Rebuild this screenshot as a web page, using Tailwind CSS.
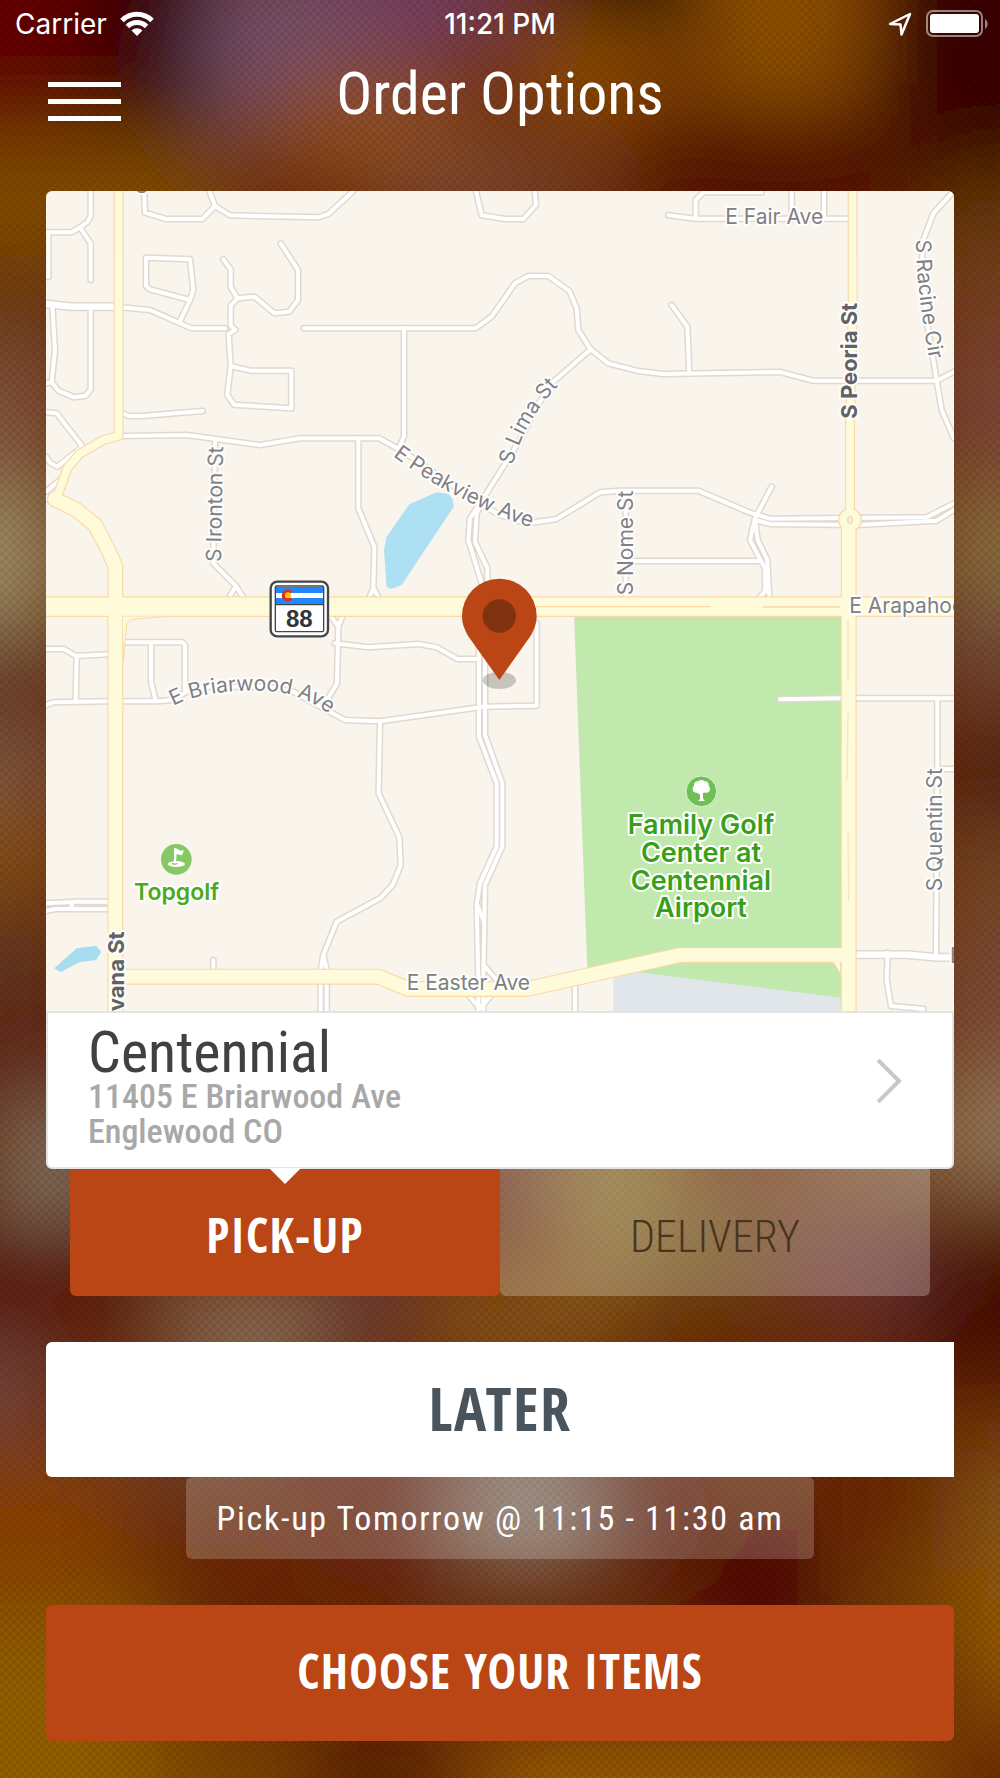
<!DOCTYPE html>
<html lang="en">
<head>
    <meta charset="UTF-8">
    <meta name="viewport" content="width=device-width, initial-scale=1.0">
    <title>Order Options</title>
    <script src="https://cdn.jsdelivr.net/npm/@tailwindcss/browser@4"></script>
</head>
<body class="relative isolate flex min-h-screen flex-col overflow-x-hidden bg-[#6a2a08] font-['Roboto_Condensed','Open_Sans_Condensed',sans-serif] text-white">
    <!-- Blurred backdrop -->
    <svg class="absolute inset-0 -z-10 h-full w-full" viewBox="0 0 1000 1778" preserveAspectRatio="none" aria-hidden="true">
        <defs>
            <filter id="soft" x="-20%" y="-20%" width="140%" height="140%"><feGaussianBlur stdDeviation="42"/></filter>
            <pattern id="dots" width="8" height="8" patternUnits="userSpaceOnUse">
                <circle cx="2" cy="2" r="2" fill="#000" fill-opacity=".08"/>
                <circle cx="6" cy="6" r="2" fill="#000" fill-opacity=".08"/>
            </pattern>
        </defs>
        <rect width="1000" height="1778" fill="#6a2a08"/>
        <g filter="url(#soft)">
            <rect x="-100" y="-100" width="200" height="240" fill="#620400"/>
            <rect x="100" y="-100" width="120" height="250" fill="#300000"/>
            <ellipse cx="310" cy="50" rx="115" ry="110" fill="#745068"/>
            <ellipse cx="430" cy="-10" rx="90" ry="70" fill="#743c60"/>
            <ellipse cx="640" cy="-40" rx="90" ry="70" fill="#100800"/>
            <rect x="700" y="-100" width="160" height="220" fill="#8c5000"/>
            <rect x="890" y="-100" width="210" height="270" fill="#380000"/>
            <rect x="-100" y="130" width="330" height="150" fill="#804800"/>
            <ellipse cx="370" cy="125" rx="110" ry="60" fill="#904e18"/>
            <ellipse cx="590" cy="70" rx="80" ry="60" fill="#8c4c00"/>
            <ellipse cx="480" cy="190" rx="120" ry="40" fill="#7c4834"/>
            <rect x="650" y="110" width="260" height="120" fill="#501000"/>
            <rect x="930" y="170" width="170" height="70" fill="#643800"/>
            <rect x="-100" y="260" width="170" height="90" fill="#6a3810"/>
            <rect x="-100" y="350" width="170" height="140" fill="#80523a"/>
            <rect x="-100" y="490" width="170" height="140" fill="#9a8860"/>
            <rect x="-100" y="630" width="170" height="90" fill="#64301c"/>
            <rect x="-100" y="720" width="170" height="90" fill="#7c5640"/>
            <rect x="-100" y="810" width="170" height="90" fill="#864e10"/>
            <rect x="-100" y="900" width="170" height="100" fill="#60341c"/>
            <rect x="-100" y="1000" width="180" height="100" fill="#602818"/>
            <ellipse cx="50" cy="1170" rx="55" ry="70" fill="#847868"/>
            <rect x="-100" y="1220" width="250" height="120" fill="#5a1204"/>
            <rect x="-100" y="1340" width="150" height="100" fill="#744640"/>
            <rect x="-100" y="1450" width="230" height="140" fill="#884000"/>
            <rect x="930" y="240" width="170" height="100" fill="#74401c"/>
            <rect x="930" y="340" width="170" height="140" fill="#7c4434"/>
            <rect x="930" y="490" width="170" height="110" fill="#8a6e40"/>
            <rect x="930" y="600" width="170" height="100" fill="#70483a"/>
            <rect x="930" y="740" width="170" height="80" fill="#501c10"/>
            <rect x="930" y="820" width="170" height="110" fill="#744420"/>
            <rect x="930" y="930" width="170" height="130" fill="#7c4c34"/>
            <rect x="930" y="1070" width="170" height="110" fill="#947858"/>
            <rect x="930" y="1180" width="170" height="50" fill="#6a3a08"/>
            <rect x="900" y="1230" width="200" height="150" fill="#461006"/>
            <rect x="500" y="1100" width="80" height="100" fill="#70403c"/>
            <ellipse cx="620" cy="1190" rx="70" ry="100" fill="#8c6c28"/>
            <ellipse cx="780" cy="1210" rx="70" ry="60" fill="#743c18"/>
            <ellipse cx="870" cy="1150" rx="60" ry="50" fill="#845c34"/>
            <ellipse cx="700" cy="1260" rx="70" ry="50" fill="#6c4c10"/>
            <ellipse cx="860" cy="1270" rx="70" ry="50" fill="#6c3438"/>
            <ellipse cx="250" cy="1335" rx="90" ry="50" fill="#8c7460"/>
            <ellipse cx="370" cy="1300" rx="50" ry="40" fill="#603040"/>
            <ellipse cx="520" cy="1320" rx="120" ry="50" fill="#885418"/>
            <rect x="120" y="1420" width="160" height="60" fill="#704838"/>
            <ellipse cx="370" cy="1500" rx="80" ry="60" fill="#682818"/>
            <ellipse cx="525" cy="1500" rx="75" ry="80" fill="#88786c"/>
            <ellipse cx="650" cy="1510" rx="60" ry="60" fill="#602010"/>
            <rect x="820" y="1430" width="130" height="100" fill="#682800"/>
            <rect x="150" y="1570" width="280" height="60" fill="#682400"/>
            <ellipse cx="760" cy="1585" rx="70" ry="60" fill="#480400"/>
            <rect x="870" y="1560" width="80" height="80" fill="#7c4400"/>
            <rect x="960" y="1450" width="140" height="120" fill="#8a5818"/>
            <rect x="960" y="1570" width="140" height="140" fill="#965c00"/>
            <rect x="-100" y="1600" width="260" height="290" fill="#905c00"/>
            <rect x="160" y="1720" width="140" height="160" fill="#7c4400"/>
            <rect x="310" y="1700" width="120" height="180" fill="#5c2000"/>
            <rect x="480" y="1730" width="440" height="150" fill="#965c00"/>
            <rect x="940" y="1730" width="160" height="150" fill="#6c2a00"/>
        </g>
        <rect width="1000" height="1778" fill="url(#dots)"/>
    </svg>

    <!-- Status bar -->
    <div class="grid h-12 grid-cols-3 items-center px-[15px] font-['Inter',sans-serif] text-[28px]">
        <div class="flex items-center gap-3">
            <span>Carrier</span>
            <svg class="h-[26px] w-9" viewBox="0 0 36 26" fill="none" stroke="#fff" stroke-width="5">
                <path d="M3 9.500a21 21 0 0 1 30 0"/>
                <path d="M8.500 15.500a13.500 13.500 0 0 1 19 0"/>
                <path d="M18 25l-5.500-5.500a8 8 0 0 1 11 0z" fill="#fff" stroke="none"/>
            </svg>
        </div>
        <div class="text-center font-medium">11:21 PM</div>
        <div class="-mr-1 flex items-center justify-end gap-[14px]">
            <svg class="h-6 w-6" viewBox="0 0 24 24" fill="none" stroke="#fff" stroke-width="2.500" stroke-linejoin="round"><path d="M22 2L13.500 22.500 12.500 12.500 2 12z"/></svg>
            <svg class="h-7 w-[63px]" viewBox="0 0 63 28">
                <rect x="1" y="1" width="55" height="25" rx="6" fill="none" stroke="#fff" stroke-opacity=".5" stroke-width="2"/>
                <rect x="4" y="4" width="49" height="19" rx="3" fill="#fff"/>
                <path d="M59 9a6 6 0 0 1 0 10z" fill="#fff" fill-opacity=".5"/>
            </svg>
        </div>
    </div>

    <!-- Header -->
    <header class="grid h-[92px] grid-cols-[auto_1fr_auto] items-center px-12">
        <button type="button" aria-label="Menu" class="flex w-[73px] flex-col gap-3 pt-3.5">
            <span class="h-[5px] w-full bg-white"></span>
            <span class="h-[5px] w-full bg-white"></span>
            <span class="h-[5px] w-full bg-white"></span>
        </button>
        <h1 class="text-center text-[60px] leading-none">Order Options</h1>
        <span class="w-[73px]"></span>
    </header>

    <main class="flex flex-col px-[46px] pt-[51px] pb-9">
        <!-- Map -->
        <svg class="block h-auto w-full rounded-t-md" viewBox="18 33 2724 2460" role="img" aria-label="Map of Centennial">
            <defs>
                <g id="streets">
                    <path d="M18 157H95L120 142 142 126 152 108V33M120 142L152 190V300M25 157V290H18"/>
                    <path d="M235 381L330 390 455 445H556M418 428L450 360 460 330 450 238 318 233V318L330 328 450 360"/>
                    <path d="M550 238L572 268V320L592 355 572 378V436L586 450 566 462 572 558 562 645 582 674 754 685V572H630L572 558"/>
                    <path d="M592 355L643 350 704 400 748 395 774 360V270L722 190"/>
                    <path d="M312 33L315 98 378 117H487L525 78 508 33M525 78L570 106 835 112 865 102 940 33"/>
                    <path d="M792 445H1306L1355 410 1425 310 1465 288H1525L1588 333 1610 385 1615 450 1652 508 1705 550 1790 572 1870 582 2220 576 2320 602H2690L2742 575"/>
                    <path d="M1092 445V770L1078 800M955 775V985L1003 1100 1000 1225 985 1260M1000 1225L1020 1260"/>
                    <path d="M248 768L440 765 660 795 780 775H1018L1090 815 1200 890 1300 960 1380 1005 1460 1030 1548 1018 1680 937 1740 932H1975L2130 998 2190 1016 2660 1012 2742 970"/>
                    <path d="M2145 1020L2190 1032 2450 1035 2690 1022 2742 990"/>
                    <path d="M1652 508L1540 605 1490 680 1440 780 1330 955 1290 1015 1285 1080 1325 1210M1330 955L1310 1000 1305 1085 1342 1165V1230"/>
                    <path d="M18 610L35 607 55 632 102 652 137 647 152 628V385M37 380L45 510 35 607"/>
                    <path d="M240 695L265 708H305L488 693M18 697L50 700 128 800 52 860 30 848 18 830M18 935L60 900"/>
                    <path d="M525 785L520 1150 588 1218 565 1256M588 1218L612 1256"/>
                    <path d="M1308 33L1325 106 1395 117H1450L1488 75 1484 33"/>
                    <path d="M1885 106L1965 116H2425M1967 116V60L1990 37H2165M2255 33V116M2352 33V116"/>
                    <path d="M2735 40L2680 100 2650 180 2645 260 2660 420 2680 540 2690 602 2705 690 2742 775"/>
                    <path d="M1895 375L1942 440 1948 580M1780 1143H2160M1757 932V1256"/>
                    <path d="M2195 920L2145 1015 2130 1080 2175 1165V1235L2155 1256M2145 1020L2153 1080 2182 1140 2188 1256"/>
                    <path d="M18 1407H72L107 1428 205 1423M110 1428L107 1562M18 1575L40 1567 205 1564"/>
                    <path d="M250 1387H428L435 1395V1530M333 1387V1505L347 1562"/>
                    <path d="M250 1564H350L400 1560 440 1535 500 1520H680L760 1535 850 1585 915 1620 1020 1624 1330 1580 1490 1577V1330"/>
                    <path d="M870 1305L895 1340 908 1305M895 1340L891 1510 855 1570M885 1390L985 1402 1135 1392 1190 1402 1252 1437H1315"/>
                    <path d="M1020 1624L1016 1840 1078 1972 1082 2055 1058 2115 1020 2155 890 2225 850 2325 842 2370V2500M850 2325L860 2370V2500"/>
                    <path d="M1317 1300V1670L1370 1810V2000L1320 2110 1310 2175 1315 2400V2500M1335 1300V1665L1387 1810V2000L1335 2115 1330 2390V2500M1312 2175L1330 2220"/>
                    <path d="M1335 2360L1370 2400M1285 2445L1320 2485 1355 2445M18 2170L110 2165H205M18 2193L45 2187H205M95 2165V2185M520 2340V2370M1605 2410V2500"/>
                    <path d="M2220 1558L2400 1555H2742M2692 1555V1750L2688 2330M2692 1767H2742M2543 2318L2540 2400 2553 2478 2615 2483 2650 2487"/>
                </g>
                <g id="collectors">
                    <path d="M18 372L95 380H235M18 955H50M2440 2324H2600L2690 2332H2742"/>
                </g>
                <g id="narrow"><path d="M236 33V768L190 780 118 822 82 865 48 960M2438 33V400L2430 720V1010"/></g>
                <g id="wide">
                    <path d="M45 958L110 990 165 1035 205 1110 226 1160V2500M2426 1030V2500"/>
                    <path d="M226 2390H1015L1105 2427H1460L1920 2325H2420"/>
                </g>
                <path id="peakview" d="M1058 828Q1250 970 1490 1048"/>
                <path id="lima" d="M1418 856Q1455 710 1580 592"/>
                <path id="racine" d="M2628 180Q2628 330 2675 575"/>
                <path id="briarwood" d="M400 1578C480 1530 680 1518 765 1548S860 1602 920 1640"/>
            </defs>

            <rect x="18" y="33" width="2724" height="2460" fill="#f9f4ec"/>
            <!-- Park, airport ground and lakes -->
            <path d="M1602 1300H2410V2460L1805 2378 1642 2370z" fill="#c1e9ae"/>
            <path d="M1720 2375L1805 2378 2410 2454V2500H1720z" fill="#e1e6ea"/>
            <path d="M1190 937L1225 942Q1242 955 1241 980L1085 1215 1053 1227 1040 1220 1032 1110 1040 1070 1108 973z" fill="#ade0f3"/>
            <path d="M43 2365L110 2305 168 2297 184 2315 168 2340 118 2347 62 2376z" fill="#a8ddf0"/>

            <!-- Roads -->
            <g fill="none" stroke-linejoin="round" stroke-linecap="round">
                <use href="#streets" stroke="#e0d9cf" stroke-width="21"/>
                <use href="#collectors" stroke="#e0d9cf" stroke-width="28"/>
                <use href="#streets" stroke="#fff" stroke-width="12"/>
                <use href="#collectors" stroke="#fff" stroke-width="19"/>
                <use href="#narrow" stroke="#fbd8a6" stroke-width="30"/>
                <use href="#wide" stroke="#fbd8a6" stroke-width="48"/>
                <path d="M0 1280H2760" stroke="#fbd8a6" stroke-width="62"/>
                <path d="M248 1308H400L275 1318 260 1330 250 1440z" fill="#fefbdb" stroke="#fbd8a6" stroke-width="3"/>
                <path d="M2370 2347L2382 2350 2402 2382V2340z" fill="#fefbdb" stroke="#fbd8a6" stroke-width="3"/>
                <circle cx="2430" cy="1020" r="36" fill="#fbd8a6"/>
                <use href="#narrow" stroke="#fefbdb" stroke-width="23"/>
                <use href="#wide" stroke="#fefbdb" stroke-width="41"/>
                <path d="M0 1280H2760" stroke="#fefbdb" stroke-width="55"/>
                <circle cx="2430" cy="1020" r="32" fill="#fefbdb"/>
                <ellipse cx="2430" cy="1020" rx="7" ry="10" fill="#f9f4ec" stroke="#fbd8a6" stroke-width="4"/>
                <path d="M1490 1280H2010M2170 1281H2400" stroke="#fbd8a6" stroke-width="4"/>
                <path d="M2424 1320V1500M2424 1600L2421 1800M2424 1960L2426 2160" stroke="#fbe3bb" stroke-width="4"/>
            </g>

            <!-- Street names -->
            <g font-family="Inter, sans-serif" font-size="63" fill="#808083" stroke="#fff" stroke-opacity=".9" stroke-width="12" stroke-linejoin="round" paint-order="stroke">
                <text x="2056" y="133">E Fair Ave</text>
                <text x="2428" y="1298">E Arapahoe Rd</text>
                <text x="1100" y="2431">E Easter Ave</text>
                <text x="2730" y="2348">E</text>
                <text x="285" y="38">S</text>
                <text transform="translate(543 1146) rotate(-89)">S Ironton St</text>
                <text transform="translate(1778 1246) rotate(-90)">S Nome St</text>
                <text transform="translate(2707 2134) rotate(-90)">S Quentin St</text>
                <text><textPath href="#peakview">E Peakview Ave</textPath></text>
                <text><textPath href="#lima">S Lima St</textPath></text>
                <text><textPath href="#racine">S Racine Cir</textPath></text>
                <text><textPath href="#briarwood">E Briarwood Ave</textPath></text>
                <g font-size="66" font-weight="700" fill="#626264">
                    <text transform="translate(2452 716) rotate(-90)">S Peoria St</text>
                    <text transform="translate(252 2254) rotate(-90)" text-anchor="end">vana St</text>
                </g>
            </g>

            <!-- Places -->
            <g font-family="Inter, sans-serif" font-weight="600" stroke="#fff" stroke-width="12" stroke-linejoin="round" paint-order="stroke" text-anchor="middle">
                <text x="410" y="2159" font-size="69" fill="#4caa1c">Topgolf</text>
                <g font-size="81" fill="#38a018">
                    <text x="1983" y="1963">Family Golf</text>
                    <text x="1983" y="2046">Center at</text>
                    <text x="1983" y="2129">Centennial</text>
                    <text x="1983" y="2212">Airport</text>
                </g>
            </g>
            <circle cx="409" cy="2038" r="46" fill="#86c964"/>
            <g fill="#fff">
                <ellipse cx="409" cy="2052" rx="26" ry="9"/>
                <path d="M402 2004L412 2006 421 2012 432 2011 426 2026 410 2022 408 2050H402z"/>
            </g>
            <path d="M396 2050q10 5 16 0" fill="none" stroke="#86c964" stroke-width="4"/>
            <circle cx="1984" cy="1834" r="46" fill="#6fbf57" stroke="#dff3d5" stroke-width="3"/>
            <g fill="#fff">
                <circle cx="1969" cy="1827" r="11"/>
                <circle cx="1999" cy="1827" r="11"/>
                <circle cx="1973" cy="1815" r="11"/>
                <circle cx="1995" cy="1815" r="11"/>
                <circle cx="1984" cy="1811" r="11"/>
                <path d="M1972 1820H1996L1999 1836 1989 1839V1856L1995 1863H1974L1980 1857V1844L1969 1836z"/>
            </g>

            <!-- Route 88 shield -->
            <g>
                <rect x="692" y="1205" width="172" height="164" rx="20" fill="#fff" stroke="#444648" stroke-width="7"/>
                <rect x="706" y="1218" width="145" height="137" rx="4" fill="#fff" stroke="#444648" stroke-width="4"/>
                <path d="M708 1221H849V1239H708zM708 1254H849V1272H708z" fill="#2088fc"/>
                <path d="M706 1274H851" stroke="#444648" stroke-width="4"/>
                <path d="M753 1238A13 13 0 1 0 753 1255" fill="none" stroke="#e4281c" stroke-width="10"/>
                <circle cx="744" cy="1246" r="9" fill="#ffc400"/>
                <text x="778" y="1340" text-anchor="middle" font-family="'Liberation Sans', sans-serif" font-size="72" font-weight="700" fill="#333436">88</text>
            </g>

            <!-- Store pin -->
            <ellipse cx="1378" cy="1501" rx="50" ry="26" fill="#000" fill-opacity=".2"/>
            <path d="M1378 1500L1287 1372C1272 1348 1266 1328 1266 1308A112 112 0 0 1 1490 1308C1490 1328 1484 1348 1469 1372z" fill="#b94614"/>
            <circle cx="1378" cy="1308" r="50" fill="#80310f"/>
        </svg>

        <!-- Store -->
        <a href="#" class="flex items-center justify-between rounded-b-md border-2 border-[#e2e4e6] bg-white pt-3 pb-[18px] pr-[50px] pl-10">
            <div class="text-[34px] leading-[35px] font-medium text-[#a8a8a8]">
                <h2 class="text-[58px] leading-[54px] font-normal text-[#414143]">Centennial</h2>
                <p>11405 E Briarwood Ave</p>
                <p>Englewood CO</p>
            </div>
            <svg class="mb-3 h-11 w-[26px]" viewBox="0 0 26 44" fill="none" stroke="#c8c8c8" stroke-width="4"><path d="M2 1L23 22 2 43"/></svg>
        </a>

        <!-- Order type -->
        <div class="grid grid-cols-2 px-6">
            <button type="button" aria-pressed="true" class="relative h-[127px] rounded-b-md bg-[#b94614] pt-1 font-['Open_Sans_Condensed',sans-serif] text-5xl font-bold tracking-wide">
                <span class="absolute -top-px left-1/2 h-4 w-8 -translate-x-1/2 bg-white [clip-path:polygon(0_0,100%_0,50%_100%)]"></span>
                PICK-UP
            </button>
            <button type="button" aria-pressed="false" class="h-[127px] rounded-b-md bg-white/25 pt-2 text-[44px] font-light text-[#4a3420]">DELIVERY</button>
        </div>

        <!-- Pick-up time -->
        <button type="button" class="mt-[46px] h-[135px] rounded-l-md bg-white pb-1 font-['Open_Sans_Condensed',sans-serif] text-6xl font-bold tracking-wide text-[#4a545c]">LATER</button>
        <p class="mx-[140px] flex h-[82px] items-center justify-center rounded-md bg-white/20 text-[34px] tracking-wider">Pick-up Tomorrow @ 11:15 - 11:30 am</p>

        <button type="button" class="mt-[46px] h-[136px] rounded-md bg-[#b94614] pb-1 font-['Open_Sans_Condensed',sans-serif] text-5xl font-bold tracking-wide">CHOOSE YOUR ITEMS</button>
    </main>
</body>
</html>
